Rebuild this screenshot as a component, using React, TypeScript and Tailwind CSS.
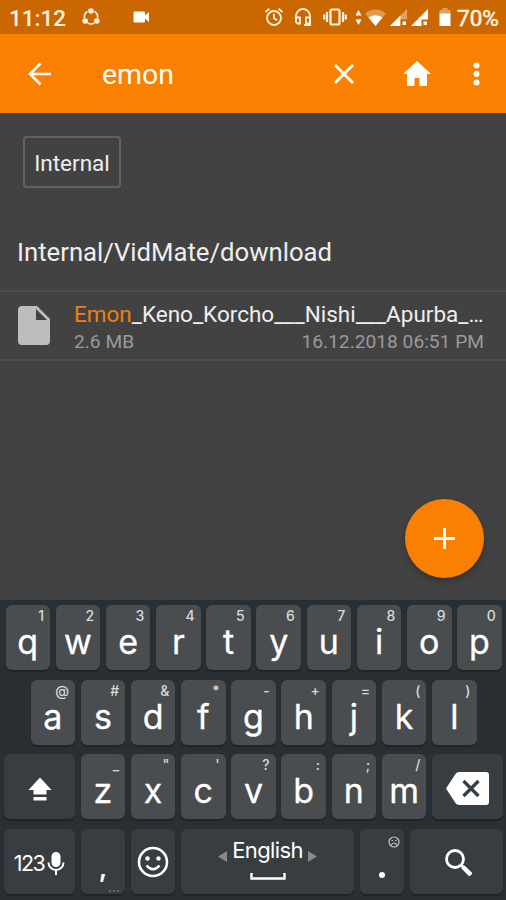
import type { ReactNode } from 'react'

const topRow = [
  ['q', '1'], ['w', '2'], ['e', '3'], ['r', '4'], ['t', '5'],
  ['y', '6'], ['u', '7'], ['i', '8'], ['o', '9'], ['p', '0'],
]
const homeRow = [
  ['a', '@'], ['s', '#'], ['d', '&'], ['f', '*'], ['g', '-'],
  ['h', '+'], ['j', '='], ['k', '('], ['l', ')'],
]
const bottomRow = [
  ['z', '_'], ['x', '"'], ['c', "'"], ['v', '?'], ['b', ':'], ['n', ';'], ['m', '/'],
]

function LetterKey({ letter, hint }: { letter: string; hint: string }) {
  return (
    <div className="flex h-[65px] w-[44.5px] shrink-0 flex-col rounded-[6px] bg-[#4a4d50] pt-[3px] shadow-[0_2px_1px_#1f2427]">
      <span className="pr-[6px] text-right text-[14px] leading-[16px] font-medium text-[#d8dada]">{hint}</span>
      <span className="mt-[1px] text-center text-[34px] leading-[34px] text-white [-webkit-text-stroke:0.3px]">{letter}</span>
    </div>
  )
}

function DarkKey({ className, children }: { className: string; children: ReactNode }) {
  return (
    <div className={`relative flex h-[65px] shrink-0 items-center justify-center rounded-[6px] bg-[#373d40] shadow-[0_2px_1px_#1f2427] ${className}`}>
      {children}
    </div>
  )
}

function StatusBar() {
  return (
    <div className="flex h-[34px] items-center bg-[#cb6700] text-[#fff3e0]">
      <span className="ml-[9px] w-[73px] pt-[2px] text-[22.5px] leading-none font-medium">11:12</span>
      <svg className="h-[18px] w-[18px] shrink-0" viewBox="0 0 18 18" fill="none" stroke="currentColor" strokeWidth="1.6">
        <path d="M5.5 3.4A6.6 6.6 0 0 0 2.4 10M12.5 3.4A6.6 6.6 0 0 1 15.6 10M5.5 14.9a6.6 6.6 0 0 0 7 0" />
        <circle cx="9" cy="3" r="2" fill="currentColor" />
        <circle cx="3.2" cy="13" r="2" fill="currentColor" />
        <circle cx="14.8" cy="13" r="2" fill="currentColor" />
      </svg>
      <svg className="ml-[33px] h-[12px] w-[17px] shrink-0" viewBox="0 0 17 12" fill="#fff">
        <path d="M1.5 0.5h9q1.5 0 1.5 1.5v2.5l4-3.5v10l-4-3.5V10q0 1.5-1.5 1.5h-9Q0.5 11.5 0.5 10V2Q0.5 0.5 1.5 0.5z" />
      </svg>

      <svg className="ml-[114px] h-[20px] w-[20px] shrink-0" viewBox="0 0 20 20" fill="none" stroke="currentColor" strokeWidth="1.8">
        <circle cx="10" cy="11" r="7" />
        <path d="M10 6.8v4.5l3.2 2M1.5 5l3.8-3.2M18.5 5l-3.8-3.2" />
      </svg>
      <svg className="ml-[10px] h-[20px] w-[18px] shrink-0" viewBox="0 0 18 20" fill="none" stroke="currentColor" strokeWidth="1.8">
        <path d="M2 15V9a7 7 0 0 1 14 0v9h-6" />
        <path d="M2 10.5h4v6H3.5L2 15zM16 10.5h-4v6h4z" />
      </svg>
      <svg className="ml-[11px] h-[18px] w-[24px] shrink-0" viewBox="0 0 24 18" fill="none" stroke="currentColor" strokeWidth="2.2">
        <rect x="7.5" y="1.5" width="9" height="15" rx="1.5" />
        <path d="M4 4v10M20 4v10M1.2 6.5v5M22.8 6.5v5" />
      </svg>
      <svg className="ml-[8px] h-[15px] w-[7px] shrink-0" viewBox="0 0 7 15" fill="#fff">
        <path d="M3.5 0L6.5 5.5H0.5zM3.5 15L0.5 9.5h6z" />
      </svg>
      <svg className="ml-[3px] h-[17px] w-[21px] shrink-0" viewBox="0 0 21 17">
        <path d="M0 4.5Q10.5-3.5 21 4.5L10.5 17z" fill="#e09a50" />
        <path d="M3.5 8.5q7-4.5 14 0L10.5 17z" fill="#fff" />
      </svg>
      <svg className="ml-[4px] h-[17px] w-[17px] shrink-0" viewBox="0 0 17 17">
        <path d="M17 0v17H0z" fill="#e0a063" />
        <path d="M10.5 6.5V17H0z" fill="#fff" />
        <path d="M10.5 10.5H17V17h-6.5z" fill="#cb6700" />
        <path d="M12.5 12.5h3.5V16h-3.5z" fill="#fff" />
      </svg>
      <svg className="ml-[4px] h-[17px] w-[17px] shrink-0" viewBox="0 0 17 17">
        <path d="M17 0v17H0z" fill="#fff" />
        <path d="M10.5 10.5H17V17h-6.5z" fill="#cb6700" />
        <path d="M12.5 12.5h3.5V16h-3.5z" fill="#fff" />
      </svg>
      <svg className="ml-[11px] h-[18px] w-[12px] shrink-0" viewBox="0 0 12 18">
        <path d="M3.5 0h5v2H11.5v4H0.5V2H3.5z" fill="#e0a063" />
        <path d="M0.5 5.5h11V18H0.5z" fill="#fff" />
      </svg>
      <span className="ml-[6px] pt-[2px] text-[22.5px] leading-none [-webkit-text-stroke:0.5px]">70%</span>
    </div>
  )
}

function AppBar() {
  return (
    <div className="flex h-[79px] items-center bg-[#f98000] text-white">
      <svg className="ml-[28px] h-[24px] w-[24px] shrink-0" viewBox="0 0 24 24" fill="none" stroke="currentColor" strokeWidth="2.6">
        <path d="M23 12H2.5M12.5 1.5L2 12l10.5 10.5" />
      </svg>
      <span className="ml-[50px] w-[231px] pt-[3px] text-[28.5px] leading-none">emon</span>
      <svg className="h-[22px] w-[22px] shrink-0" viewBox="0 0 22 22" fill="none" stroke="currentColor" strokeWidth="2.8">
        <path d="M2 2l18 18M20 2L2 20" />
      </svg>
      <svg className="ml-[48px] h-[25px] w-[28px] shrink-0" viewBox="0 0 28 25" fill="currentColor">
        <path d="M14 0l14 13h-4v12h-7.5v-8h-5v8H4V13H0z" />
      </svg>
      <svg className="ml-[42px] h-[24px] w-[7px] shrink-0" viewBox="0 0 7 24" fill="currentColor">
        <circle cx="3.5" cy="3.5" r="3" />
        <circle cx="3.5" cy="12" r="3" />
        <circle cx="3.5" cy="20.5" r="3" />
      </svg>
    </div>
  )
}

function Results() {
  return (
    <div className="relative h-[487px] bg-[#424242] text-[#eeeeee]">
      <div className="flex h-[177px] flex-col pt-[23px]">
        <div className="ml-[23px] flex h-[52px] w-[98px] items-center justify-center rounded-[4px] border-2 border-[#616161] pt-[2px] text-[22.5px] leading-none">
          Internal
        </div>
        <p className="mt-[48px] ml-[17px] text-[25.7px] leading-[32px]">Internal/VidMate/download</p>
      </div>

      <div className="flex h-[71px] border-y-2 border-[#4c4c4c]">
        <svg className="mt-[14px] ml-[18px] h-[39px] w-[32px] shrink-0" viewBox="0 0 32 39">
          <path d="M4 0h15l13 13v22q0 4-4 4H4q-4 0-4-4V4q0-4 4-4z" fill="#bdbdbd" />
          <path d="M18 3v11h11z" fill="#424242" />
        </svg>
        <div className="mt-[9px] ml-[24px] w-[410px]">
          <p className="text-[22.5px] leading-[26px] whitespace-nowrap">
            <span className="text-[#e98212]">Emon</span>_Keno_Korcho___Nishi___Apurba_…
          </p>
          <p className="mt-[3px] flex justify-between text-[19.2px] leading-[24px] text-[#9a9a9a]">
            <span>2.6 MB</span>
            <span>16.12.2018 06:51 PM</span>
          </p>
        </div>
      </div>

      {/* floating add button */}
      <button className="absolute top-[386px] right-[22px] flex h-[79px] w-[79px] items-center justify-center rounded-full bg-[#f98000] shadow-[0_3px_6px_rgba(0,0,0,0.25)]">
        <svg className="h-[21px] w-[21px]" viewBox="0 0 21 21" stroke="#fff" strokeWidth="3">
          <path d="M10.5 0v21M0 10.5h21" />
        </svg>
      </button>
    </div>
  )
}

function Keyboard() {
  return (
    <div className="flex h-[300px] flex-col gap-[9.6px] bg-[#292f33] pt-[5px] font-[Inter,sans-serif]">
      <div className="flex gap-[5.7px] pl-[5.5px]">
        {topRow.map(([letter, hint]) => <LetterKey key={letter} letter={letter} hint={hint} />)}
      </div>
      <div className="flex gap-[5.7px] pl-[30.5px]">
        {homeRow.map(([letter, hint]) => <LetterKey key={letter} letter={letter} hint={hint} />)}
      </div>
      <div className="flex gap-[5.7px] pl-[4px]">
        <DarkKey className="w-[71px]">
          <svg className="mt-[4px] h-[24px] w-[24px]" viewBox="0 0 24 24" fill="#fff">
            <path d="M12 0.5L23.5 13H18.5v4.5h-13V13H0.5zM5.5 20h13v3.5h-13z" />
          </svg>
        </DarkKey>
        {bottomRow.map(([letter, hint]) => <LetterKey key={letter} letter={letter} hint={hint} />)}
        <DarkKey className="w-[71px]">
          <svg className="mt-[3px] h-[33px] w-[43px]" viewBox="0 0 43 33">
            <path d="M13 0h27q3 0 3 3v27q0 3-3 3H13q-2 0-3.5-2L0 16.5 9.5 2Q11 0 13 0z" fill="#fff" />
            <path d="M17.5 9l15 15M32.5 9l-15 15" stroke="#373d40" strokeWidth="3.4" />
          </svg>
        </DarkKey>
      </div>
      <div className="flex gap-[5.7px] pl-[4px]">
        <DarkKey className="w-[71px]">
          <div className="flex items-center gap-[3px] pt-[5px]">
            <span className="text-[21.5px] leading-none tracking-[-1.6px] text-white">123</span>
            <svg className="h-[23px] w-[18px]" viewBox="0 0 18 23" fill="none" stroke="#fff" strokeWidth="2">
              <rect x="5.5" y="1" width="7" height="13" rx="3.5" fill="#fff" />
              <path d="M1.5 10.5a7.5 7.5 0 0 0 15 0M9 18v5" />
            </svg>
          </div>
        </DarkKey>
        <DarkKey className="w-[44.5px] flex-col">
          <span className="mt-[20px] text-[27px] leading-[32px] font-semibold text-white">,</span>
          <span className="mt-[-1px] self-end pr-[5px] text-[14px] leading-[8px] text-[#7f8486]">...</span>
        </DarkKey>
        <DarkKey className="w-[44.5px]">
          <svg className="mt-[2px] h-[32px] w-[32px]" viewBox="0 0 32 32" fill="none" stroke="#fff" strokeWidth="2.6">
            <circle cx="16" cy="16" r="14" />
            <circle cx="10.5" cy="12.5" r="2.2" fill="#fff" stroke="none" />
            <circle cx="21.5" cy="12.5" r="2.2" fill="#fff" stroke="none" />
            <path d="M9.5 19.5q6.5 7.5 13 0" />
          </svg>
        </DarkKey>
        <DarkKey className="w-[173px]">
          <div className="flex flex-col items-center">
            <div className="flex items-center gap-[5px]">
              <svg className="mt-[14px] h-[11px] w-[9px]" viewBox="0 0 10 11" fill="#85898b" preserveAspectRatio="none">
                <path d="M10 0v11L0 5.5z" />
              </svg>
              <span className="text-[22px] leading-[28px] tracking-[-0.6px] text-white">English</span>
              <svg className="mt-[14px] h-[11px] w-[9px]" viewBox="0 0 10 11" fill="#85898b" preserveAspectRatio="none">
                <path d="M0 0v11l10-5.5z" />
              </svg>
            </div>
            <svg className="mt-[9px] mb-[7px] h-[7px] w-[36px]" viewBox="0 0 36 7" fill="none" stroke="#fff" strokeWidth="2.4">
              <path d="M1.5 0v5.5h33V0" />
            </svg>
          </div>
        </DarkKey>
        <DarkKey className="w-[44.5px]">
          <svg className="mt-[27px] h-[6px] w-[6px]" viewBox="0 0 6 6" fill="#fff">
            <circle cx="3" cy="3" r="3" />
          </svg>
          <svg className="absolute top-[7px] right-[4px] h-[12px] w-[12px]" viewBox="0 0 12 12" fill="none" stroke="#c4c6c7" strokeWidth="1.2">
            <circle cx="6" cy="6" r="5" />
            <path d="M3 9q3-4 6 0M3.5 4.5h1.5M7 4.5h1.5" />
          </svg>
        </DarkKey>
        <DarkKey className="w-[93px]">
          <svg className="mt-[3px] ml-[4px] h-[27px] w-[27px]" viewBox="0 0 27 27" fill="none" stroke="#fff">
            <circle cx="10" cy="10" r="8.5" strokeWidth="2.8" />
            <path d="M16 16l2.5 2.5" strokeWidth="3" />
            <path d="M18 18l8 8" strokeWidth="4.5" />
          </svg>
        </DarkKey>
      </div>
    </div>
  )
}

export default function App() {
  return (
    <div className="h-[900px] w-[506px] overflow-hidden bg-[#424242] font-[Roboto,sans-serif]">
      <StatusBar />
      <AppBar />
      <Results />
      <Keyboard />
    </div>
  )
}
